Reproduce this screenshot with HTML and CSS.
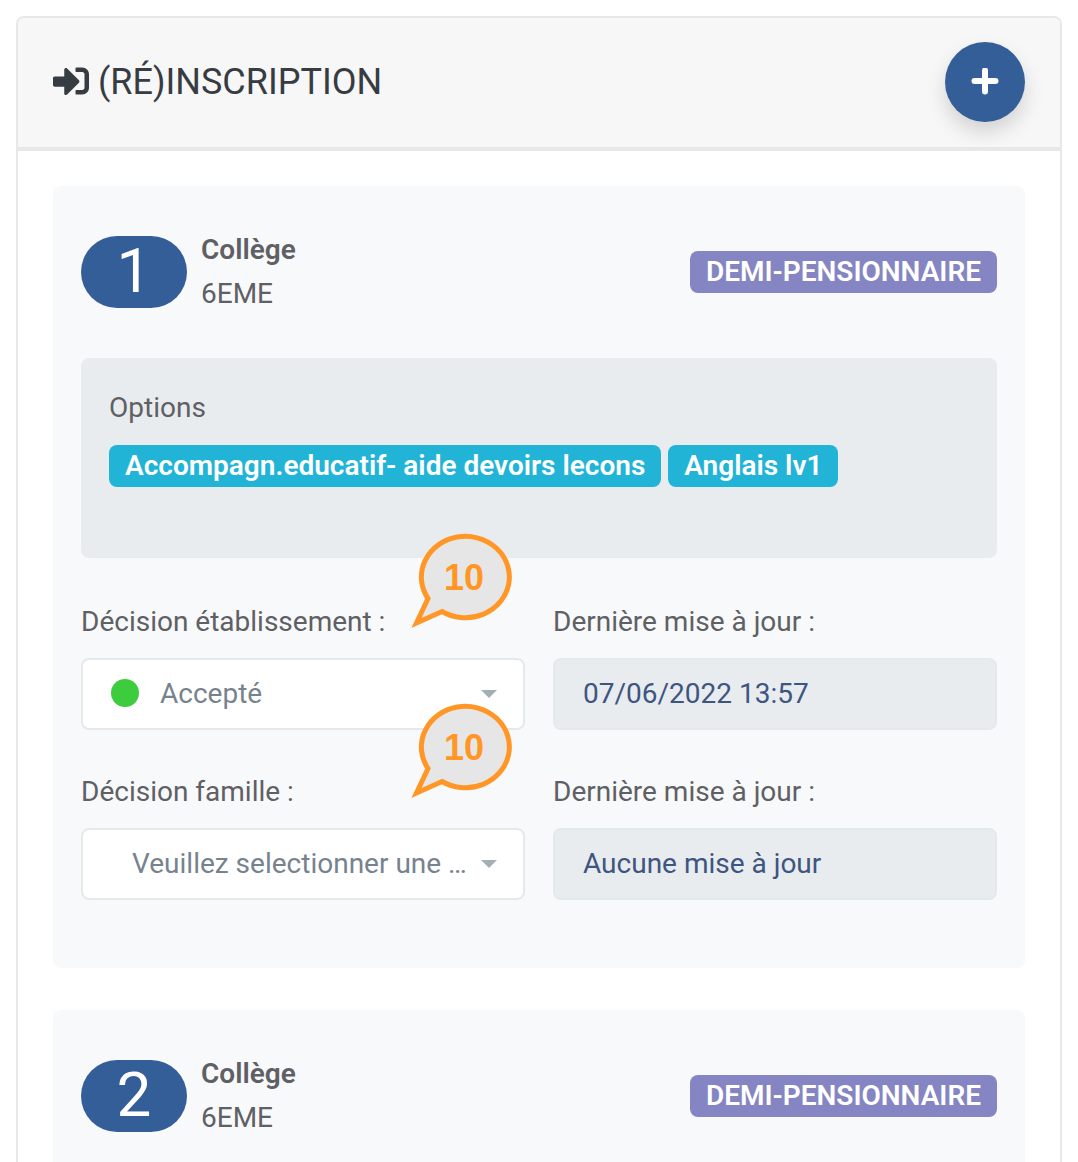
FILE: index.html
```html
<!DOCTYPE html>
<html lang="fr">
<head>
    <meta charset="UTF-8">
    <meta name="viewport" content="width=device-width, initial-scale=1.0">
    <title>(Ré)inscription</title>
    <link rel="stylesheet" href="styles.css">
</head>
<body>
    <main class="card">
        <!-- Header -->
        <header class="card-header">
            <h1>
                <svg class="title-icon" viewBox="0 0 512 512" aria-hidden="true">
                    <path d="M416 448h-84c-6.600 0-12-5.400-12-12v-40c0-6.600 5.400-12 12-12h84c17.700 0 32-14.300 32-32V160c0-17.700-14.300-32-32-32h-84c-6.600 0-12-5.400-12-12V76c0-6.600 5.400-12 12-12h84c53 0 96 43 96 96v192c0 53-43 96-96 96zm-47-201L201 79c-15-15-41-4.500-41 17v96H24c-13.300 0-24 10.700-24 24v96c0 13.300 10.700 24 24 24h136v96c0 21.500 26 32 41 17l168-168c9.300-9.400 9.300-24.600 0-34z"/>
                </svg>
                (RÉ)INSCRIPTION
            </h1>
            <button class="add-button" type="button" aria-label="Ajouter">
                <svg viewBox="0 0 28 28" aria-hidden="true">
                    <path d="M14 2.500v21M3.500 13h21"/>
                </svg>
            </button>
        </header>

        <div class="card-body">
            <!-- Inscription 1 -->
            <section class="entry">
                <div class="entry-head">
                    <span class="number">1</span>
                    <div class="level">
                        <strong>Collège</strong>
                        <span>6EME</span>
                    </div>
                    <span class="badge badge-purple">DEMI-PENSIONNAIRE</span>
                </div>

                <div class="options">
                    <p>Options</p>
                    <div class="option-list">
                        <span class="badge badge-cyan">Accompagn.educatif- aide devoirs lecons</span>
                        <span class="badge badge-cyan">Anglais lv1</span>
                    </div>
                </div>

                <form class="decisions">
                    <div class="field">
                        <label for="decision-etab">Décision établissement :</label>
                        <div class="select-box">
                            <span class="dot"></span>
                            <select id="decision-etab">
                                <option>Accepté</option>
                            </select>
                            <span class="caret"></span>
                        </div>
                        <svg class="callout" viewBox="0 0 104 98">
                            <path d="M18 65.500A44 40.700 0 1 1 32 78.500L6.500 90Z"/>
                            <text x="54" y="57">10</text>
                        </svg>
                    </div>
                    <div class="field">
                        <label for="maj-etab">Dernière mise à jour :</label>
                        <input type="text" id="maj-etab" value="07/06/2022 13:57" readonly>
                    </div>
                    <div class="field">
                        <label for="decision-famille">Décision famille :</label>
                        <div class="select-box select-empty">
                            <select id="decision-famille">
                                <option>Veuillez selectionner une …</option>
                            </select>
                            <span class="caret"></span>
                        </div>
                        <svg class="callout" viewBox="0 0 104 98">
                            <path d="M18 65.500A44 40.700 0 1 1 32 78.500L6.500 90Z"/>
                            <text x="54" y="57">10</text>
                        </svg>
                    </div>
                    <div class="field">
                        <label for="maj-famille">Dernière mise à jour :</label>
                        <input type="text" id="maj-famille" value="Aucune mise à jour" readonly>
                    </div>
                </form>
            </section>

            <!-- Inscription 2 -->
            <section class="entry">
                <div class="entry-head">
                    <span class="number">2</span>
                    <div class="level">
                        <strong>Collège</strong>
                        <span>6EME</span>
                    </div>
                    <span class="badge badge-purple">DEMI-PENSIONNAIRE</span>
                </div>
            </section>
        </div>
    </main>
</body>
</html>
```
FILE: styles.css
```css
/* General Styles */
* {
    box-sizing: border-box;
}

body {
    font-family: Roboto, "Liberation Sans", sans-serif;
    font-size: 28px;
    line-height: 44px;
    color: #5f6064;
    margin: 0;
    padding: 16px;
    height: 100vh;
    overflow: hidden;
    background-color: white;
}

strong {
    font-weight: 600;
}

/* Card */
.card {
    border: 2px solid #e8e8e8;
    border-radius: 8px;
}

.card-header {
    display: flex;
    justify-content: space-between;
    align-items: center;
    padding: 24px 35px 25px;
    background-color: #f7f7f7;
    border-bottom: 4px solid #e8e8e8;
    border-radius: 6px 6px 0 0;
}

.card-header h1 {
    display: flex;
    align-items: center;
    gap: 9px;
    margin: 0;
    font-size: 36px;
    font-weight: 400;
    color: #373c43;
}

.title-icon {
    width: 36px;
    height: 36px;
    margin-bottom: 2px;
    fill: #373c43;
}

.add-button {
    display: flex;
    justify-content: center;
    align-items: center;
    width: 80px;
    height: 80px;
    padding: 0;
    border: none;
    border-radius: 50%;
    background-color: #345e98;
    box-shadow: 0 10px 20px rgba(0, 0, 0, 0.15);
    cursor: pointer;
}

.add-button svg {
    width: 28px;
    height: 28px;
    fill: none;
    stroke: white;
    stroke-width: 6;
    stroke-linecap: round;
}

.card-body {
    display: flex;
    flex-direction: column;
    gap: 42px;
    padding: 35px;
}

/* Inscription */
.entry {
    padding: 50px 28px 68px;
    background-color: #f8f9fb;
    border-radius: 8px;
}

.entry-head {
    display: flex;
    align-items: center;
    gap: 14px;
    height: 72px;
}

.number {
    width: 106px;
    height: 72px;
    border-radius: 36px;
    background-color: #345e98;
    color: white;
    font-size: 62px;
    line-height: 70px;
    text-align: center;
}

.level {
    flex: 1;
    display: flex;
    flex-direction: column;
}

.badge {
    display: inline-block;
    padding: 0 16px;
    border-radius: 8px;
    color: white;
    font-weight: 600;
    line-height: 42px;
}

.badge-purple {
    background-color: #8585c3;
}

.badge-cyan {
    background-color: #22b4d6;
}

.options {
    min-height: 200px;
    margin: 50px 0 42px;
    padding: 28px;
    background-color: #e8ecee;
    border-radius: 8px;
}

.options p {
    margin: 0 0 14px;
}

/* Decisions */
.decisions {
    display: grid;
    grid-template-columns: 1fr 1fr;
    gap: 40px 28px;
}

.field {
    position: relative;
    display: flex;
    flex-direction: column;
    gap: 14px;
    min-width: 0;
}

.field input,
.select-box {
    width: 100%;
    height: 72px;
    padding: 0 28px;
    border: 2px solid #e4eaec;
    border-radius: 8px;
}

.field input {
    padding-bottom: 2px;
    background-color: #e8ecee;
    color: #3e5582;
    font: inherit;
}

.select-box {
    display: flex;
    align-items: center;
    padding-right: 26px;
    background-color: white;
}

.select-empty {
    padding-left: 49px;
}

.select-box select {
    flex: 1;
    min-width: 0;
    padding: 0;
    appearance: none;
    border: none;
    background: none;
    color: #76838f;
    font: inherit;
}

.dot {
    width: 28px;
    height: 28px;
    margin: 0 21px 2px 0;
    border-radius: 50%;
    background-color: #3dcc3d;
}

.caret {
    border-top: 8px solid #a3afb7;
    border-left: 8px solid transparent;
    border-right: 8px solid transparent;
}

/* Numbered callouts over the form */
.callout {
    position: absolute;
    top: -67px;
    left: 329px;
    width: 104px;
    height: 98px;
}

.callout path {
    fill: #e6e6e6;
    stroke: #ff9626;
    stroke-width: 5;
}

.callout text {
    fill: #ff9626;
    font-family: "Liberation Sans", sans-serif;
    font-size: 36px;
    font-weight: 700;
    text-anchor: middle;
}
```
